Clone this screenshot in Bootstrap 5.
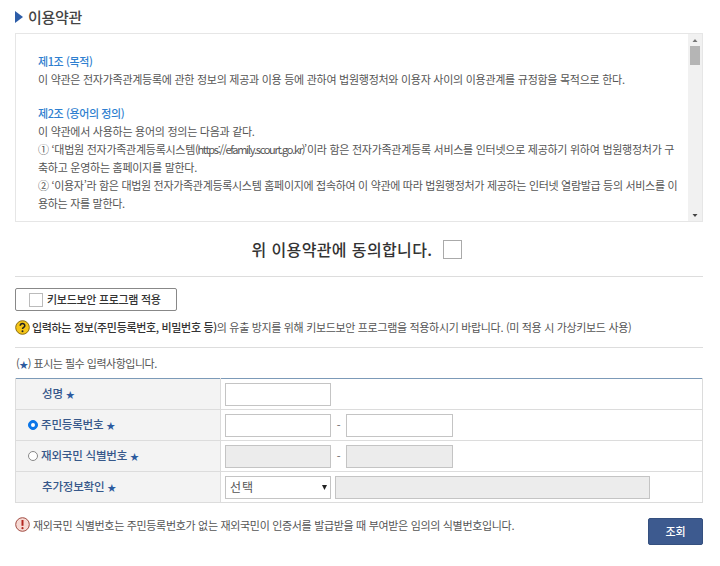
<!DOCTYPE html>
<html lang="ko"><head><meta charset="utf-8">
<link href="https://cdn.jsdelivr.net/npm/bootstrap@5.3.0/dist/css/bootstrap.min.css" rel="stylesheet">
<style>
html,body{height:566px;overflow:hidden}
body{font-family:"Noto Sans CJK KR","Liberation Sans",sans-serif;font-size:11px;color:#555;background:#fff;letter-spacing:-.27px}
.pg{padding:3px 17px 0 15px}
.ttl{height:30px;padding-bottom:2px;font-size:15px;font-weight:500;color:#444;gap:5px}
.ttl svg{display:block}
.terms{height:189px;border:1px solid #e6e6e6;line-height:18px;overflow:hidden}
.terms-txt{padding:18px 4px 0 22px;flex:1;min-width:0}
.terms-txt p{margin:0;white-space:nowrap}
.terms-txt p.tight{letter-spacing:-.31px}
.terms-txt h6{margin:16px 0 0;font-size:11px;line-height:18px;font-weight:500;color:#2f7fd0;letter-spacing:-.4px}
.terms-txt h6:first-child{margin-top:0}
.url{letter-spacing:-1.3px}
.sbar{width:14px;background:#f1f1f1;flex:none}
.sbar i{display:block;width:10px;margin:0 auto;background:#b5b5b5;height:19px}
.sarrow{height:12px;color:#555;font-size:0}
.agree{height:54px;padding-right:4px;font-size:16px;font-weight:500;color:#333;gap:11px;letter-spacing:.38px}
.bx{display:block;flex:none;border:1px solid #aaa;background:#fff}
.bx-lg{width:19px;height:19px}
.bx-sm{width:14px;height:14px;border-color:#bbb}
.rule{height:1px;background:#ddd}
.kb{width:162px;height:23px;border:1px solid #888;border-radius:2px;background:#fff;color:#333;font-size:11px;font-weight:500;padding:0 0 0 13px;gap:4px;margin-top:11px;letter-spacing:-.3px}
.kb:hover{background:#fff;color:#333;border-color:#888}
.hint{height:36px;padding-bottom:3px;gap:2px;color:#555;letter-spacing:-.33px}
.hint b{font-weight:500;color:#333}
.ico{display:block;flex:none}
.req{height:30px;color:#555;padding-left:1px;letter-spacing:-.5px}
.req em{font-style:normal;color:#2b5a9e;font-size:9px}
.star{font-style:normal;color:#2b5a9e;font-size:9px}
.ftbl{width:100%;table-layout:fixed;border-collapse:collapse;border-top:1px solid #7c9ab8;margin:0}
.ftbl th,.ftbl td{height:31px;padding:0 5px 0 4px;border:1px solid #dcdcdc;border-top-color:#dcdcdc}
.ftbl tr:first-child th,.ftbl tr:first-child td{border-top:0}
.ftbl th{width:205px;background:#f3f3f3;font-size:11.500px;font-weight:500;color:#37588a;padding-left:26px;letter-spacing:-.2px}
.ftbl th.rad{padding-left:12px}
.ftbl th .form-check-input{width:10px;height:10px;margin:0 3px 0 0;vertical-align:-1px;border-color:#888;float:none}
.ftbl th .form-check-input:checked{background-color:#0b76e8;border-color:#0b76e8}
.fld{display:block;flex:none;width:106px;height:23px;border:1px solid #c4c4c4;background:#fff;padding:0 4px;border-radius:0;box-shadow:none;outline:0}
.fld:disabled{background:#ececec}
.fld-w{width:107px}
.fld-xw{width:315px}
.dash{width:15px;text-align:center;color:#666}
.sel{font-size:12px;letter-spacing:1px;color:#555;font-family:inherit;appearance:none;background:#fff url("data:image/svg+xml,%3Csvg xmlns='http://www.w3.org/2000/svg' width='5' height='5'%3E%3Cpath d='M0 0H5L2.500 5Z' fill='%23222'/%3E%3C/svg%3E") no-repeat right 3px center}
.foot{height:42px;padding-top:14px;color:#555;gap:3px;letter-spacing:-.32px}
.go{width:55px;height:27px;background:#3d5a8f;border:1px solid #35507f;border-radius:2px;color:#fff;font-size:11px;font-weight:500;padding:0;margin-top:15px}
.go:hover{background:#3d5a8f;color:#fff;border-color:#35507f}
</style></head><body>
<div class="pg">
<div class="ttl d-flex align-items-center">
<svg width="8" height="12" viewBox="0 0 8 12"><path d="M0 0L8 6L0 12Z" fill="#2d5da8"/></svg><span>이용약관</span></div>
<div class="terms d-flex">
<div class="terms-txt">
<h6>제1조 (목적)</h6>
<p>이 약관은 전자가족관계등록에 관한 정보의 제공과 이용 등에 관하여 법원행정처와 이용자 사이의 이용관계를 규정함을 목적으로 한다.</p>
<h6>제2조 (용어의 정의)</h6>
<p>이 약관에서 사용하는 용어의 정의는 다음과 같다.</p>
<p>① ‘대법원 전자가족관계등록시스템<span class="url">(https://efamily.scourt.go.kr)</span>’이라 함은 전자가족관계등록 서비스를 인터넷으로 제공하기 위하여 법원행정처가 구<br>축하고 운영하는 홈페이지를 말한다.</p>
<p class="tight">② ‘이용자’라 함은 대법원 전자가족관계등록시스템 홈페이지에 접속하여 이 약관에 따라 법원행정처가 제공하는 인터넷 열람발급 등의 서비스를 이<br>용하는 자를 말한다.</p>
</div>
<div class="sbar d-flex flex-column">
<svg class="sarrow" width="14" height="12" viewBox="0 0 14 12"><path d="M7 5L9.500 8H4.500Z" fill="#777"/></svg>
<i></i>
<div class="flex-grow-1"></div>
<svg class="sarrow" width="14" height="12" viewBox="0 0 14 12"><path d="M7 8L9.500 5H4.500Z" fill="#444"/></svg>
</div>
</div>
<div class="agree d-flex align-items-center justify-content-center"><span>위 이용약관에 동의합니다.</span><span class="bx bx-lg"></span></div>
<div class="rule"></div>
<button type="button" class="btn kb d-flex align-items-center"><span class="bx bx-sm"></span><span>키보드보안 프로그램 적용</span></button>
<div class="hint d-flex align-items-center">
<svg class="ico" width="15" height="15" viewBox="0 0 15 15"><circle cx="7.500" cy="7.500" r="6.800" fill="#f5c518" stroke="#8a6d10"/><path d="M5.200 5.800C5.300 2.900 9.800 2.900 9.800 5.700C9.800 7.300 7.500 7.400 7.500 9" fill="none" stroke="#222" stroke-width="1.500"/><circle cx="7.500" cy="11.200" r="1" fill="#222"/></svg>
<span><b>입력하는 정보(주민등록번호, 비밀번호 등)</b>의 유출 방지를 위해 키보드보안 프로그램을 적용하시기 바랍니다. (미 적용 시 가상키보드 사용)</span></div>
<div class="rule"></div>
<div class="req d-flex align-items-center"><span>(<em>★</em>) 표시는 필수 입력사항입니다.</span></div>
<table class="ftbl">
<tr><th>성명 <span class="star">★</span></th><td><input class="fld" type="text" aria-label="성명"></td></tr>
<tr><th class="rad"><input class="form-check-input" type="radio" name="idt" checked aria-label="주민등록번호">주민등록번호 <span class="star">★</span></th><td><div class="d-flex align-items-center"><input class="fld" type="text" aria-label="앞자리"><span class="dash">-</span><input class="fld fld-w" type="text" aria-label="뒷자리"></div></td></tr>
<tr><th class="rad"><input class="form-check-input" type="radio" name="idt" aria-label="재외국민 식별번호">재외국민 식별번호 <span class="star">★</span></th><td><div class="d-flex align-items-center"><input class="fld" type="text" disabled aria-label="앞자리"><span class="dash">-</span><input class="fld fld-w" type="text" disabled aria-label="뒷자리"></div></td></tr>
<tr><th>추가정보확인 <span class="star">★</span></th><td><div class="d-flex align-items-center gap-1"><select class="fld sel" aria-label="추가정보"><option>선택</option></select><input class="fld fld-xw" type="text" disabled aria-label="추가정보 입력"></div></td></tr>
</table>
<div class="d-flex justify-content-between align-items-start">
<div class="foot d-flex align-items-start">
<svg class="ico" width="15" height="15" viewBox="0 0 15 15"><circle cx="7.500" cy="7.500" r="6.800" fill="#f7d9d3" stroke="#a04a40"/><path d="M7.500 3V8.800" stroke="#b3261e" stroke-width="2"/><circle cx="7.500" cy="11.200" r="1.100" fill="#b3261e"/></svg>
<span>재외국민 식별번호는 주민등록번호가 없는 재외국민이 인증서를 발급받을 때 부여받은 임의의 식별번호입니다.</span></div>
<button type="button" class="btn go">조회</button>
</div>
</div>
<script src="https://cdn.jsdelivr.net/npm/bootstrap@5.3.0/dist/js/bootstrap.bundle.min.js"></script>
</body></html>
